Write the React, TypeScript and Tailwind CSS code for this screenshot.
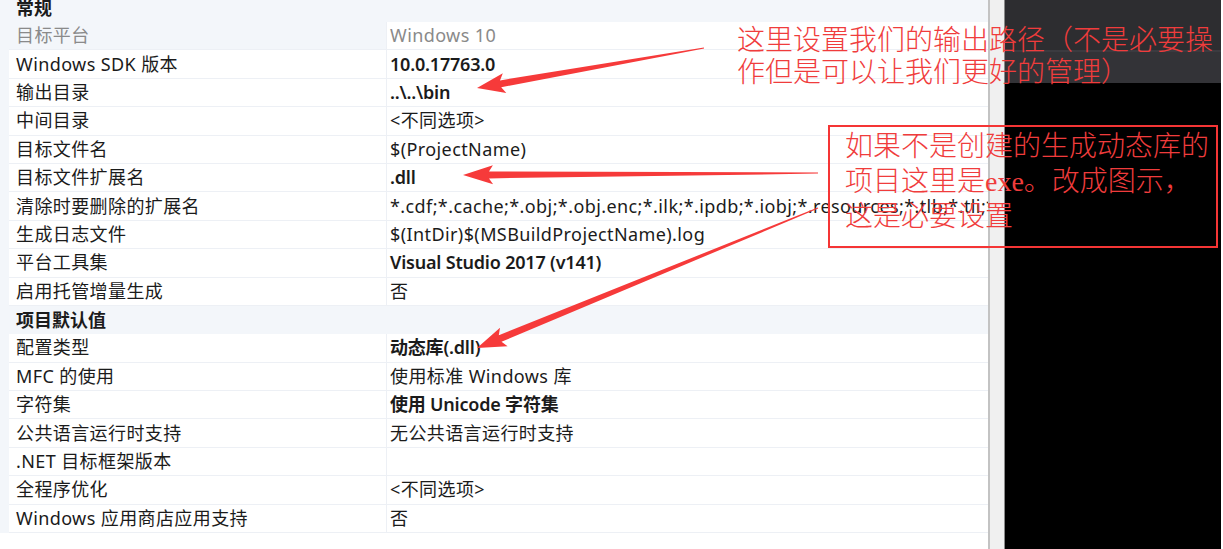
type Row = {
  label: string;
  value?: string;
  bold?: boolean;
  disabled?: boolean;
  header?: boolean;
};

const rows: Row[] = [
  { label: "目标平台", value: "Windows 10", disabled: true },
  { label: "Windows SDK 版本", value: "10.0.17763.0", bold: true },
  { label: "输出目录", value: "..\\..\\bin", bold: true },
  { label: "中间目录", value: "<不同选项>" },
  { label: "目标文件名", value: "$(ProjectName)" },
  { label: "目标文件扩展名", value: ".dll", bold: true },
  {
    label: "清除时要删除的扩展名",
    value: "*.cdf;*.cache;*.obj;*.obj.enc;*.ilk;*.ipdb;*.iobj;*.resources;*.tlb;*.tli;*",
  },
  { label: "生成日志文件", value: "$(IntDir)$(MSBuildProjectName).log" },
  { label: "平台工具集", value: "Visual Studio 2017 (v141)", bold: true },
  { label: "启用托管增量生成", value: "否" },
  { label: "项目默认值", header: true },
  { label: "配置类型", value: "动态库(.dll)", bold: true },
  { label: "MFC 的使用", value: "使用标准 Windows 库" },
  { label: "字符集", value: "使用 Unicode 字符集", bold: true },
  { label: "公共语言运行时支持", value: "无公共语言运行时支持" },
  { label: ".NET 目标框架版本", value: "" },
  { label: "全程序优化", value: "<不同选项>" },
  { label: "Windows 应用商店应用支持", value: "否" },
];

// tapered red arrow, thin at the tail and fat near the head
function arrowPoints(tx: number, ty: number, px: number, py: number, headLen: number, headHalf: number, shaftHalf: number) {
  const dx = px - tx;
  const dy = py - ty;
  const len = Math.hypot(dx, dy);
  const ux = dx / len;
  const uy = dy / len;
  const nx = -uy;
  const ny = ux;
  const bx = px - ux * headLen;
  const by = py - uy * headLen;
  const wx = px - ux * (headLen + 4);
  const wy = py - uy * (headLen + 4);
  const pts = [
    [tx + nx * 0.6, ty + ny * 0.6],
    [bx + nx * shaftHalf, by + ny * shaftHalf],
    [wx + nx * headHalf, wy + ny * headHalf],
    [px, py],
    [wx - nx * headHalf, wy - ny * headHalf],
    [bx - nx * shaftHalf, by - ny * shaftHalf],
    [tx - nx * 0.6, ty - ny * 0.6],
  ];
  return pts.map((p) => `${p[0].toFixed(1)},${p[1].toFixed(1)}`).join(" ");
}

function PropRow({ row }: { row: Row }) {
  if (row.header) {
    return (
      <div className="h-[28.4px] shrink-0 flex items-center bg-[#f3f6fa] pl-[7px] font-bold tracking-normal text-[#1b1b1b]">
        {row.label}
      </div>
    );
  }
  return (
    <div className="h-[28.4px] shrink-0 flex">
      <div
        className={`w-[378px] shrink-0 flex items-center pl-[7px] border-b border-r border-[#edf0f5] ${
          row.disabled ? "bg-[#f3f6fa] text-[#8a8a8a]" : "bg-white text-[#1b1b1b]"
        }`}
      >
        {row.label}
      </div>
      <div
        className={`flex-1 min-w-0 flex items-center pl-[3px] bg-white border-b border-[#edf0f5] whitespace-nowrap overflow-hidden ${
          row.disabled ? "text-[#8a8a8a]" : "text-[#1b1b1b]"
        } ${row.bold ? "font-semibold tracking-[-0.2px]" : ""}`}
      >
        {row.value}
      </div>
    </div>
  );
}

export default function App() {
  return (
    <div className="relative w-[1223px] h-[549px] overflow-hidden bg-white flex">
      {/* property grid */}
      <div
        className="w-[988px] shrink-0 flex flex-col text-[18px] tracking-[0.4px]"
        style={{ fontFamily: '"Noto Sans", "Noto Sans CJK SC", sans-serif' }}
      >
        <div className="bg-[#f3f6fa] flex flex-col pl-[9px]">
          <div className="h-[28px] -mt-[6px] shrink-0 flex items-center pl-[7px] font-bold tracking-normal text-[#1b1b1b]">常规</div>
          {rows.map((r, i) => (
            <PropRow key={i} row={r} />
          ))}
        </div>
        <div className="flex-1 bg-white" />
      </div>

      {/* splitter */}
      <div className="w-[2px] shrink-0 bg-[#c3c3c3]" />
      <div className="w-[15px] shrink-0 bg-[#f0f0f0] border-r border-[#8a8a8a]" />

      {/* dark side panel */}
      <div className="w-[216px] shrink-0 flex flex-col">
        <div className="h-[50px] bg-[#2d2d30]" />
        <div className="h-[33px] bg-[#333337] border-t-2 border-[#3b3b40]" />
        <div className="flex-1 bg-black" />
      </div>
      <div className="flex-1 bg-white" />

      {/* annotations */}
      <svg className="absolute inset-0 pointer-events-none" width="1223" height="549">
        <polygon points={arrowPoints(704, 48, 477, 88, 24, 10, 3.5)} fill="#f63a3a" />
        <polygon points={arrowPoints(818, 173, 463, 175, 26, 9.5, 3.5)} fill="#f63a3a" />
        <polygon points={arrowPoints(818, 208, 477, 348, 25, 10, 3.5)} fill="#f63a3a" />
      </svg>

      <div
        className="absolute left-[737px] top-[25px] text-[28px] leading-[32px] font-light text-[#f03c3c] whitespace-nowrap"
        style={{ fontFamily: '"Liberation Serif", "Noto Sans CJK SC", serif' }}
      >
        这里设置我们的输出路径（不是必要操
        <br />
        作但是可以让我们更好的管理）
      </div>

      <div
        className="absolute left-[828px] top-[125px] w-[390px] h-[123px] border-2 border-[#f53535] pl-[15px] pt-[2px] text-[28px] leading-[35px] font-light text-[#f03c3c] whitespace-nowrap"
        style={{ fontFamily: '"Liberation Serif", "Noto Sans CJK SC", serif' }}
      >
        如果不是创建的生成动态库的
        <br />
        项目这里是exe。改成图示，
        <br />
        这是必要设置
      </div>
    </div>
  );
}
